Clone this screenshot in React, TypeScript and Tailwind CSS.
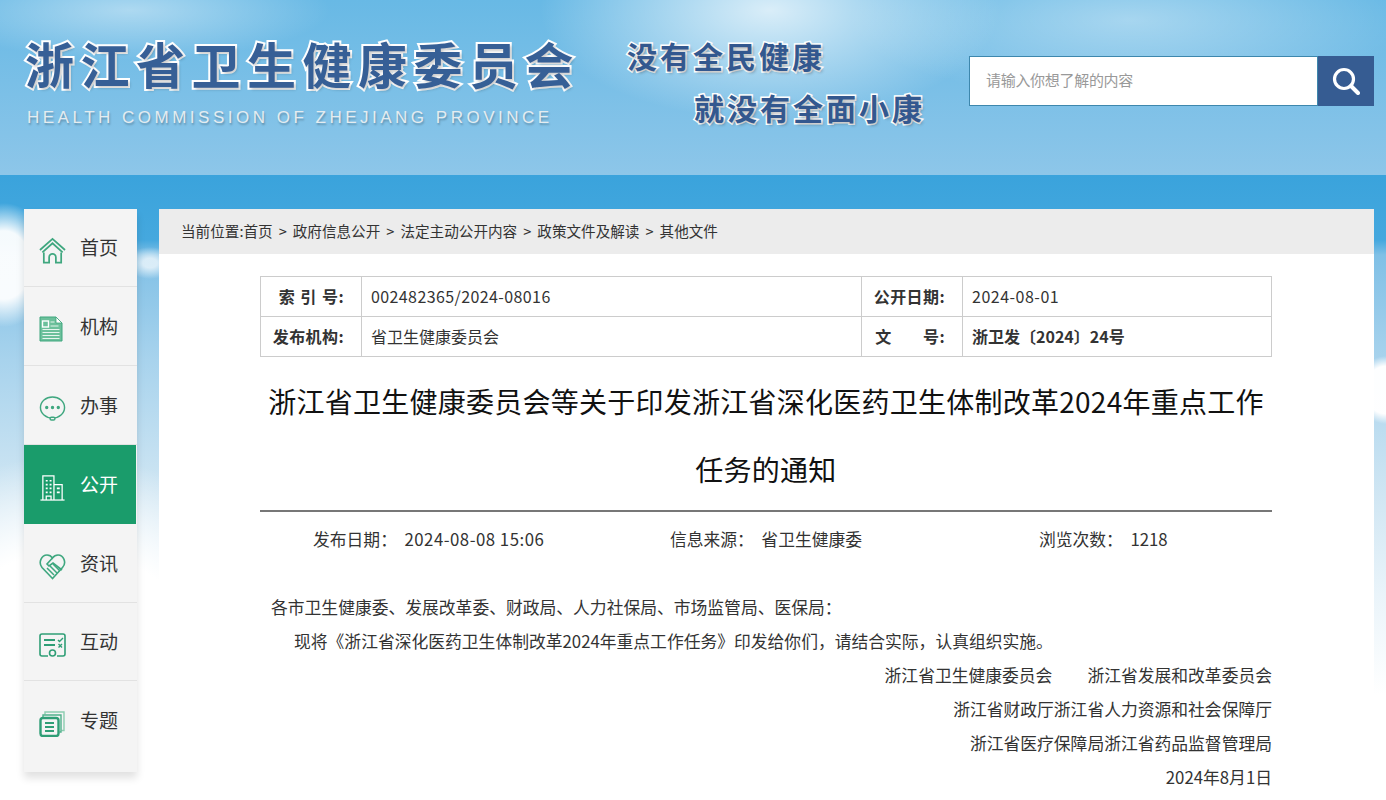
import { ReactNode } from "react";

const font = "font-['Noto_Sans_CJK_SC','Noto_Sans',sans-serif]";

const crumbs = ["当前位置:首页", "政府信息公开", "法定主动公开内容", "政策文件及解读", "其他文件"];

function HomeIcon() {
  return (
    <svg width="27" height="27" viewBox="0 0 28 28" fill="none" stroke="#3fa77f" strokeWidth="1.800">
      <path d="M1 13.500 14 2l13 11.500" />
      <path d="M3.500 16 14 6.500 24.500 16" />
      <path d="M5 16v10.500h5.500V21a3.500 3.500 0 0 1 7 0v5.500H23V16" />
    </svg>
  );
}

function DocIcon() {
  return (
    <svg width="24" height="26" viewBox="0 0 24 26">
      <path d="M1 1h16l6 6v18H1z" fill="#6cc09b" stroke="#3fa77f" strokeWidth="1" />
      <path d="M17 1v6h6z" fill="#fff" stroke="#3fa77f" strokeWidth="0.800" />
      <rect x="3.500" y="5" width="6" height="6" fill="none" stroke="#fff" strokeWidth="1.400" />
      <path d="M11.500 6h4M11.500 10h8M3.500 13.500h17M3.500 16.500h17M3.500 19.500h17M3.500 22.500h17" stroke="#e6f5ee" strokeWidth="1.100" />
    </svg>
  );
}

function ChatIcon() {
  return (
    <svg width="27" height="27" viewBox="0 0 28 28" fill="none" stroke="#3fa77f" strokeWidth="1.500">
      <ellipse cx="14" cy="13" rx="12.500" ry="11" />
      <circle cx="8" cy="13" r="1" fill="#3fa77f" />
      <circle cx="14" cy="13" r="1" fill="#3fa77f" />
      <circle cx="20" cy="13" r="1" fill="#3fa77f" />
      <rect x="11.500" y="23" width="5" height="3" rx="1.400" fill="#f4f4f4" />
    </svg>
  );
}

function BuildingIcon() {
  return (
    <svg width="27" height="27" viewBox="0 0 27 28" fill="none" stroke="#fff" strokeWidth="1.300">
      <path d="M1 27h25" />
      <path d="M3.500 27V2h11.500v25M15 11h8.500v16" />
      <path d="M6.500 7h2M10.500 7h2M6.500 11h2M10.500 11h2M6.500 15h2M10.500 15h2M6.500 19h2M10.500 19h2M18 15h3M18 19h3" strokeWidth="1.800" />
      <path d="M7 27v-4h5v4" />
    </svg>
  );
}

function HeartIcon() {
  return (
    <svg width="27" height="27" viewBox="0 0 27 27" fill="none" stroke="#3fa77f" strokeWidth="1.600">
      <path d="M13.500 25.500 3 14.500C-1 9.500 2.500 2 8 2c2.500 0 4.200 1 5.500 3C15 3 17 2 19 2c5.500 0 9 7.500 4.500 12.500z" />
      <path d="M13.500 5 8 11l2 2 4-3 9 7" />
      <path d="M8 15l7 7M11 13l7 7M14 11l7 7" strokeWidth="1.500" />
    </svg>
  );
}

function CardIcon() {
  return (
    <svg width="27" height="24" viewBox="0 0 27 24" fill="none" stroke="#2f9e76" strokeWidth="1.600">
      <path d="M9 23H3a2 2 0 0 1-2-2V3a2 2 0 0 1 2-2h21a2 2 0 0 1 2 2v18a2 2 0 0 1-2 2h-6" />
      <path d="M5 7h11M5 12h11" strokeWidth="1.800" />
      <path d="M19 7l1.500 1.500L24 5M19.500 11l3.500 3.500M23 11l-3.500 3.500" strokeWidth="1.400" />
      <circle cx="13.500" cy="20" r="3" fill="#f4f4f4" />
    </svg>
  );
}

function StackIcon() {
  return (
    <svg width="26" height="26" viewBox="0 0 26 26" fill="none">
      <path d="M6 3.500V1h19v18.500h-2.500" stroke="#8ccdb0" strokeWidth="1.400" />
      <path d="M4 6V4h18v17h-1.500" stroke="#4fb08b" strokeWidth="1.400" />
      <rect x="1.500" y="7" width="18" height="18" rx="2.500" fill="#f4f4f4" stroke="#2f9e76" strokeWidth="2.400" />
      <path d="M6 12h9M6 16h9M6 20h9" stroke="#2f9e76" strokeWidth="1.800" />
    </svg>
  );
}

function NavItem({ icon, label, active, short, last }: { icon: ReactNode; label: string; active?: boolean; short?: boolean; last?: boolean }) {
  if (active) {
    return (
      <a href="#" className="mr-px flex h-[79px] items-center bg-[#1a9c6b] pl-[15px] text-[19px] text-white">
        <span className="mt-[6px] flex w-[41px] justify-start">{icon}</span>
        {label}
      </a>
    );
  }
  return (
    <a
      href="#"
      className={`flex items-center pl-[15px] text-[19px] text-[#333] ${short ? "h-[78px]" : "h-[79px]"} ${last ? "" : "border-b border-[#e2e2e2]"}`}
    >
      <span className="mt-[6px] flex w-[41px] justify-start">{icon}</span>
      {label}
    </a>
  );
}

function Row({ label, value, label2, value2, numeric, bold }: { label: string; value: string; label2: string; value2: string; numeric?: boolean; bold?: boolean }) {
  return (
    <tr className="h-10">
      <th className="border border-[#ccc] pr-[17px] pb-[2px] text-right font-bold tracking-[0.400px] [word-spacing:1.200px]">{label}</th>
      <td className={numeric ? "border border-[#ccc] pb-[2px] pl-[9px] tracking-[0.400px]" : "border border-[#ccc] pb-[2px] pl-[9px]"}>{value}</td>
      <th className="border border-[#ccc] pr-[17px] pb-[2px] text-right font-bold tracking-[0.400px] [word-spacing:1.200px]">{label2}</th>
      <td className={bold ? "border border-[#ccc] pb-[2px] pl-[9px] font-bold" : "border border-[#ccc] pb-[2px] pl-[9px] tracking-[0.500px]"}>{value2}</td>
    </tr>
  );
}

export default function App() {
  return (
    <div className={`h-screen overflow-hidden ${font} text-[#333]`}>
      {/* Header */}
      <header className="flex h-[175px] items-start bg-[radial-gradient(ellipse_230px_110px_at_770px_10px,rgba(255,255,255,0.75),transparent),radial-gradient(ellipse_280px_80px_at_1130px_20px,rgba(255,255,255,0.4),transparent),radial-gradient(ellipse_200px_50px_at_130px_10px,rgba(255,255,255,0.45),transparent),linear-gradient(#68b9e5,#8dc6e9)] pl-[25px]">
        <div className="w-[578px] shrink-0 pt-[33px]">
          <h1 className="text-[49px] leading-[60px] font-bold tracking-[6.500px] whitespace-nowrap text-[#365f96] [-webkit-text-stroke:4px_#fff] [paint-order:stroke_fill] [text-shadow:2px_2px_3px_rgba(0,0,0,0.2)]">
            浙江省卫生健康委员会
          </h1>
          <p className="mt-[15px] pl-[2px] font-['Liberation_Sans',sans-serif] text-[17px] leading-5 tracking-[3.500px] whitespace-nowrap text-[#e4ecf0] [text-shadow:1px_2px_2px_rgba(0,0,0,0.25)]">
            HEALTH COMMISSION OF ZHEJIANG PROVINCE
          </p>
        </div>
        <div className="ml-[24px] w-[342px] shrink-0 pt-[35px] text-[30px] leading-[40px] font-bold tracking-[3px] whitespace-nowrap text-[#33588f] [-webkit-text-stroke:3px_#fff] [paint-order:stroke_fill] [text-shadow:2px_2px_3px_rgba(0,0,0,0.25)]">
          <p>没有全民健康</p>
          <p className="mt-[12px] ml-[67px]">就没有全面小康</p>
        </div>
        <div className="mt-[56px] flex h-[50px] w-[405px] shrink-0">
          <div className="flex h-full w-[349px] items-center border border-[#3d87ad] bg-white pb-[2px] pl-[16px] text-[15px] tracking-[-0.300px] text-[#999]">
            请输入你想了解的内容
          </div>
          <button className="flex h-full w-[56px] items-center justify-center bg-[#365c92]">
            <svg width="28" height="28" viewBox="0 0 28 28" fill="none" stroke="#fff">
              <circle cx="12" cy="12" r="9.500" strokeWidth="3.200" />
              <path d="M19 19l7 7" strokeWidth="4" strokeLinecap="round" />
            </svg>
          </button>
        </div>
      </header>

      {/* Main */}
      <main className="flex h-[625px] items-start bg-[radial-gradient(ellipse_48px_62px_at_4px_90px,rgba(255,255,255,0.95)_55%,transparent),radial-gradient(ellipse_24px_16px_at_150px_88px,rgba(255,255,255,0.7)_30%,transparent),radial-gradient(ellipse_30px_34px_at_1386px_215px,rgba(255,255,255,0.98)_70%,transparent),radial-gradient(ellipse_240px_240px_at_70px_520px,#fff_60%,transparent),linear-gradient(#3aa3dc_0px,#45a8de_65px,#80c0e6_80px,#a8d3ed_185px,#d0e6f3_320px,#eaf4fa_420px,#fff_520px)] pt-[34px] pl-[24px]">
        <nav className="w-[113px] shrink-0 bg-[#f4f4f4] pb-[12px] shadow-[0_6px_8px_rgba(0,0,0,0.12)]">
          <NavItem icon={<HomeIcon />} label="首页" short />
          <NavItem icon={<DocIcon />} label="机构" />
          <NavItem icon={<ChatIcon />} label="办事" />
          <NavItem icon={<BuildingIcon />} label="公开" active />
          <NavItem icon={<HeartIcon />} label="资讯" />
          <NavItem icon={<CardIcon />} label="互动" short />
          <NavItem icon={<StackIcon />} label="专题" last />
        </nav>

        <section className="ml-[22px] w-[1215px] shrink-0 bg-white pb-10">
          <div className="flex h-[45px] items-center bg-[#ececec] pb-[1px] pl-[22px] text-[14.600px] text-[#333]">
            {crumbs.map((crumb, i) => (
              <span key={crumb}>
                {i > 0 && <span className="mx-[6px]">&gt;</span>}
                {crumb}
              </span>
            ))}
          </div>

          <div className="mx-[101px] mt-[22px] w-[1012px]">
            <table className="w-full table-fixed border-collapse text-base">
              <colgroup>
                <col className="w-[101px]" />
                <col className="w-[500px]" />
                <col className="w-[101px]" />
                <col />
              </colgroup>
              <tbody>
                <Row label="索 引 号:" value="002482365/2024-08016" label2="公开日期:" value2="2024-08-01" numeric />
                <Row label="发布机构:" value="省卫生健康委员会" label2={"文\u00a0\u00a0\u00a0\u00a0\u00a0\u00a0号:"} value2="浙卫发〔2024〕24号" bold />
              </tbody>
            </table>

            <h2 className="mt-[10px] text-center text-[28px] leading-[68px] font-normal tracking-[0.250px] text-[#111]">
              浙江省卫生健康委员会等关于印发浙江省深化医药卫生体制改革2024年重点工作任务的通知
            </h2>

            <div className="mt-[7px] grid h-[56px] grid-cols-3 items-center border-t-2 border-[#777] pt-[2px] text-center text-[16.800px]">
              <span>
                发布日期：&nbsp;&nbsp;<span className="tracking-[0.500px]">2024-08-08 15:06</span>
              </span>
              <span>信息来源：&nbsp;&nbsp;省卫生健康委</span>
              <span>浏览次数：&nbsp;&nbsp;1218</span>
            </div>

            <div className="mt-[24px] text-[16.800px] leading-[34px]">
              <p className="pl-[11px]">各市卫生健康委、发展改革委、财政局、人力社保局、市场监管局、医保局：</p>
              <p className="pl-[34px]">现将《浙江省深化医药卫生体制改革2024年重点工作任务》印发给你们，请结合实际，认真组织实施。</p>
              <p className="flex justify-end gap-[35px]">
                <span>浙江省卫生健康委员会</span>
                <span>浙江省发展和改革委员会</span>
              </p>
              <p className="text-right">浙江省财政厅浙江省人力资源和社会保障厅</p>
              <p className="text-right">浙江省医疗保障局浙江省药品监督管理局</p>
              <p className="text-right">2024年8月1日</p>
            </div>
          </div>
        </section>
      </main>
    </div>
  );
}
